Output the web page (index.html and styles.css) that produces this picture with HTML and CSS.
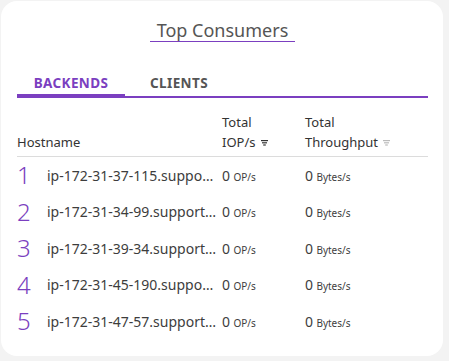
FILE: index.html
```html
<!DOCTYPE html>
<html>
<head>
<meta charset="utf-8">
<link rel="stylesheet" href="styles.css">
</head>
<body>
<div class="card">
  <div class="title-wrap"><h2 class="title">Top Consumers</h2></div>
  <div class="tabs">
    <div class="tab active">BACKENDS</div>
    <div class="tab">CLIENTS</div>
  </div>
  <table class="tbl">
    <thead>
      <tr>
        <th class="c-host">Hostname</th>
        <th class="c-iop">Total<br>IOP/s <svg class="sort" width="7" height="6" viewBox="0 0 7 6"><rect x="0" y="0" width="7" height="1.2"/><rect x="1" y="2.2" width="5" height="1.2"/><rect x="2.2" y="4.4" width="2.6" height="1.2"/></svg></th>
        <th class="c-tp">Total<br>Throughput <svg class="sort light" width="7" height="6" viewBox="0 0 7 6"><rect x="0" y="0" width="7" height="1.2"/><rect x="1" y="2.2" width="5" height="1.2"/><rect x="2.2" y="4.4" width="2.6" height="1.2"/></svg></th>
      </tr>
    </thead>
    <tbody>
      <tr><td class="c-host"><div class="hostcell"><span class="rank">1</span><span class="host">ip-172-31-37-115.support.example.internal</span></div></td><td><span class="val">0</span> <small>OP/s</small></td><td><span class="val">0</span> <small>Bytes/s</small></td></tr>
      <tr><td class="c-host"><div class="hostcell"><span class="rank">2</span><span class="host">ip-172-31-34-99.support.example.internal</span></div></td><td><span class="val">0</span> <small>OP/s</small></td><td><span class="val">0</span> <small>Bytes/s</small></td></tr>
      <tr><td class="c-host"><div class="hostcell"><span class="rank">3</span><span class="host">ip-172-31-39-34.support.example.internal</span></div></td><td><span class="val">0</span> <small>OP/s</small></td><td><span class="val">0</span> <small>Bytes/s</small></td></tr>
      <tr><td class="c-host"><div class="hostcell"><span class="rank">4</span><span class="host">ip-172-31-45-190.support.example.internal</span></div></td><td><span class="val">0</span> <small>OP/s</small></td><td><span class="val">0</span> <small>Bytes/s</small></td></tr>
      <tr><td class="c-host"><div class="hostcell"><span class="rank">5</span><span class="host">ip-172-31-47-57.support.example.internal</span></div></td><td><span class="val">0</span> <small>OP/s</small></td><td><span class="val">0</span> <small>Bytes/s</small></td></tr>
    </tbody>
  </table>
</div>
</body>
</html>
```
FILE: styles.css
```css
html, body {
  margin: 0;
  padding: 0;
  background: #f3f3f3;
}
body {
  font-family: "Noto Sans", "Open Sans", sans-serif;
  color: #3d3d3d;
  padding: 1px 0 0 1px;
}
.card {
  box-sizing: border-box;
  width: 442px;
  height: 355px;
  background: #fff;
  border-radius: 16px;
  padding: 0 15px 0 16px;
}
.title-wrap {
  display: flex;
  justify-content: center;
  padding-top: 18px;
}
.title {
  margin: 0;
  font-weight: 400;
  font-size: 18px;
  line-height: 22px;
  color: #555;
  padding: 0 7px;
  border-bottom: 1px solid #7b3fc0;
}
.tabs {
  display: flex;
  margin-top: 28px;
  border-bottom: 2px solid #7b3fc0;
  height: 26px;
}
.tab {
  width: 108px;
  text-align: center;
  font-size: 13.5px;
  font-weight: 700;
  letter-spacing: 0.4px;
  color: #555;
  line-height: 16px;
  padding-top: 5px;
  box-sizing: border-box;
}
.tab.active {
  color: #7b3fc0;
  box-shadow: inset 0 -2px 0 #7b3fc0, 0 2px 0 #7b3fc0;
}
.tbl {
  width: 100%;
  border-collapse: collapse;
  margin-top: 14px;
  table-layout: fixed;
}
.tbl th {
  text-align: left;
  font-weight: 400;
  font-size: 13px;
  line-height: 20px;
  color: #333;
  vertical-align: bottom;
  padding: 0 0 4px 0;
  border-bottom: 1px solid #dcdcdc;
}
.c-host { width: 205px; }
.c-iop { width: 83px; }
.tbl td {
  padding: 0;
  height: 36.5px;
  font-size: 13px;
  color: #3d3d3d;
  vertical-align: middle;
  white-space: nowrap;
}
.tbl td .val {
  font-size: 14px;
}
.tbl td small {
  font-size: 10px;
}
.hostcell {
  display: flex;
  align-items: center;
}
.rank {
  width: 30px;
  flex: none;
  color: #7b3fc0;
  font-size: 24px;
  font-weight: 300;
  line-height: 24px;
}
.host {
  overflow: hidden;
  text-overflow: ellipsis;
  white-space: nowrap;
  font-size: 14px;
  padding-right: 4px;
}
.sort {
  fill: #333;
  vertical-align: 1px;
  margin-left: 2px;
}
.sort.light {
  fill: #bbb;
}
```
